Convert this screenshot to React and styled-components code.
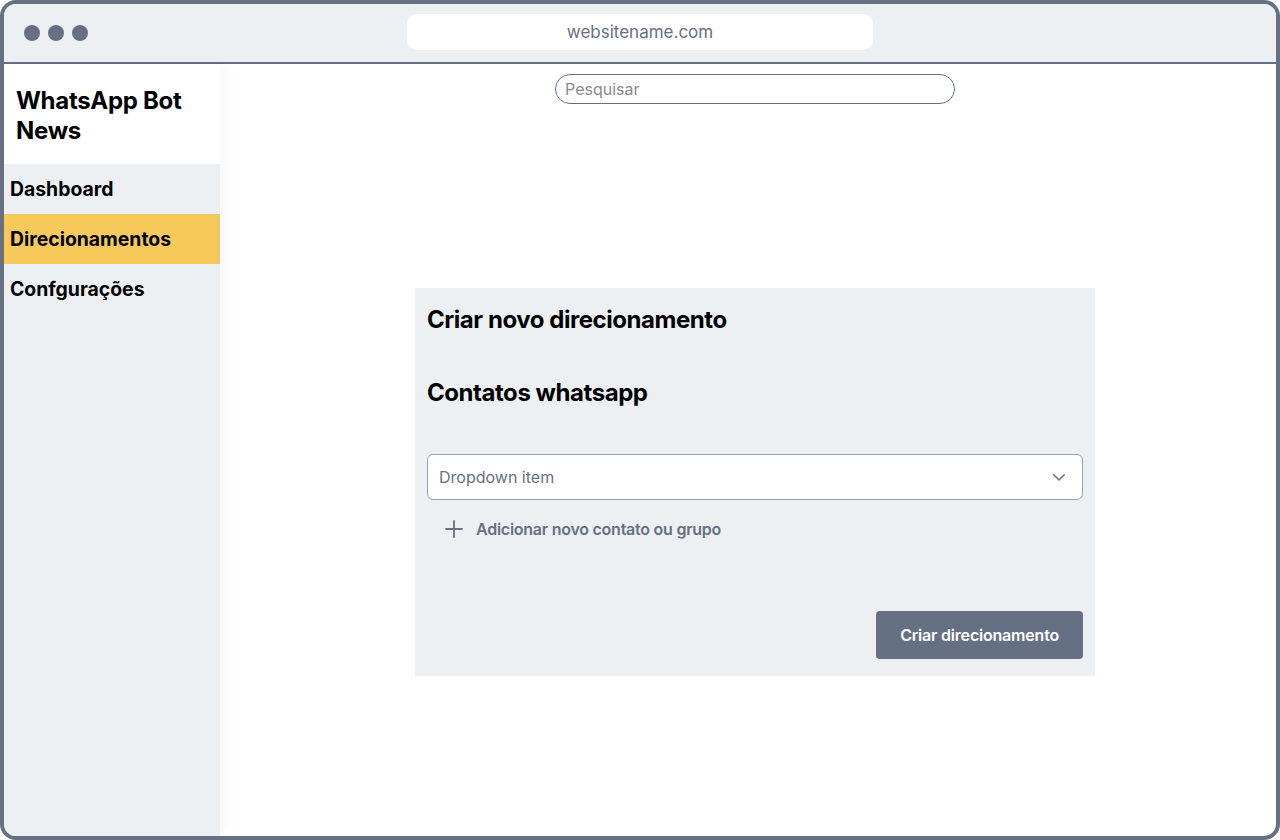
import React from 'react'
import styled, { createGlobalStyle } from 'styled-components'

const GlobalStyle = createGlobalStyle`
	* {
		box-sizing: border-box;
	}
	body {
		margin: 0;
		font-family: Inter, "Noto Sans", "Liberation Sans", sans-serif;
		background: #ffffff;
	}
`

const Frame = styled.div`
	width: 1280px;
	height: 840px;
	border: 4px solid #667085;
	border-radius: 16px;
	overflow: hidden;
	display: flex;
	flex-direction: column;
	background: #ffffff;
`
const TopBar = styled.div`
	height: 60px;
	flex-shrink: 0;
	background: #edf0f3;
	border-bottom: 2px solid #667085;
	display: flex;
	align-items: center;
	padding-left: 20px;
`
const Dots = styled.div`
	display: flex;
	gap: 8px;
`
const Dot = styled.span`
	width: 16px;
	height: 16px;
	border-radius: 50%;
	background: #667085;
`
const UrlBar = styled.div`
	margin-left: 319px;
	width: 466px;
	height: 36px;
	margin-top: -2px;
	background: #ffffff;
	border-radius: 10px;
	display: flex;
	align-items: center;
	justify-content: center;
	color: #667085;
	font-size: 17px;
`
const Body = styled.div`
	flex: 1;
	display: flex;
	min-height: 0;
`
const Sidebar = styled.aside`
	width: 216px;
	flex-shrink: 0;
	background: #edf0f3;
	box-shadow: 6px 0 14px rgba(16, 24, 40, 0.035);
	position: relative;
	z-index: 1;
`
const Brand = styled.div`
	height: 100px;
	background: #ffffff;
	padding: 22px 12px 0;
	font-size: 24px;
	line-height: 30px;
	font-weight: 700;
	color: #000000;
	letter-spacing: -0.3px;
`
const NavItem = styled.div`
	height: 50px;
	display: flex;
	align-items: center;
	padding-left: 6px;
	font-size: 19.4px;
	font-weight: 700;
	color: #000000;
	background: ${props => (props.active ? '#f6ca5a' : 'transparent')};
`
const Main = styled.main`
	flex: 1;
	display: flex;
	flex-direction: column;
	align-items: center;
	padding-left: 14px;
	padding-top: 10px;
`
const Search = styled.input`
	width: 400px;
	height: 30px;
	border: 1px solid #667085;
	border-radius: 15px;
	padding: 0 9px;
	font-family: inherit;
	font-size: 16px;
	color: #333;
	outline: none;
	&::placeholder {
		color: #8a8a8a;
	}
`
const Card = styled.section`
	margin-top: 184px;
	width: 680px;
	background: #edf0f3;
	padding: 12px 12px 17px;
	display: flex;
	flex-direction: column;
`
const Heading = styled.h2`
	margin: ${props => props.gap || 0}px 0 0;
	font-size: 24px;
	line-height: 40px;
	font-weight: 700;
	color: #000000;
	letter-spacing: -0.45px;
`
const Dropdown = styled.div`
	margin-top: 41px;
	height: 46px;
	background: #ffffff;
	border: 1px solid #98a2b3;
	border-radius: 6px;
	display: flex;
	align-items: center;
	justify-content: space-between;
	padding: 0 14px 0 11px;
	font-size: 16px;
	color: #667085;
`
const AddRow = styled.div`
	margin-top: 14px;
	height: 30px;
	display: flex;
	align-items: center;
	gap: 13px;
	padding-left: 18px;
	font-size: 16px;
	font-weight: 600;
	color: #667085;
	letter-spacing: -0.25px;
`
const Footer = styled.div`
	margin-top: 67px;
	display: flex;
	justify-content: flex-end;
`
const Button = styled.button`
	height: 48px;
	padding: 0 24px;
	border: none;
	border-radius: 4px;
	background: #667085;
	color: #ffffff;
	font-family: inherit;
	font-size: 16px;
	font-weight: 600;
	letter-spacing: -0.2px;
	cursor: pointer;
`

const Chevron = () => (
	<svg width="18" height="18" viewBox="0 0 24 24" fill="none" stroke="#667085" strokeWidth="2" strokeLinecap="round" strokeLinejoin="round">
		<path d="M5 9l7 7 7-7" />
	</svg>
)

const Plus = () => (
	<svg width="18" height="18" viewBox="0 0 18 18" fill="none" stroke="#667085" strokeWidth="1.8" strokeLinecap="round">
		<path d="M9 1v16M1 9h16" />
	</svg>
)

export default function App() {
	return (
		<>
			<GlobalStyle />
			<Frame>
				<TopBar>
					<Dots>
						<Dot />
						<Dot />
						<Dot />
					</Dots>
					<UrlBar>websitename.com</UrlBar>
				</TopBar>
				<Body>
					<Sidebar>
						<Brand>WhatsApp Bot<br />News</Brand>
						<NavItem>Dashboard</NavItem>
						<NavItem active>Direcionamentos</NavItem>
						<NavItem>Confgurações</NavItem>
					</Sidebar>
					<Main>
						<Search placeholder="Pesquisar" />
						<Card>
							<Heading>Criar novo direcionamento</Heading>
							<Heading gap={33}>Contatos whatsapp</Heading>
							<Dropdown>
								<span>Dropdown item</span>
								<Chevron />
							</Dropdown>
							<AddRow>
								<Plus />
								<span>Adicionar novo contato ou grupo</span>
							</AddRow>
							<Footer>
								<Button>Criar direcionamento</Button>
							</Footer>
						</Card>
					</Main>
				</Body>
			</Frame>
		</>
	)
}
